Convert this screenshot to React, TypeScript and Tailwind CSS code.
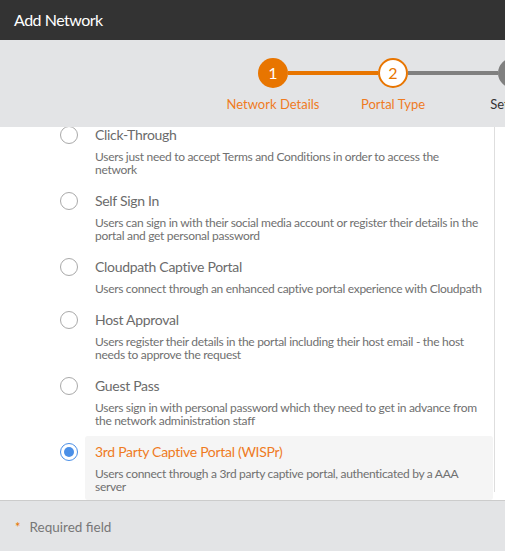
import React from "react";

type Item = { title: string; desc: string; selected?: boolean; narrow?: boolean };

const items: Item[] = [
  {
    title: "Click-Through",
    desc: "Users just need to accept Terms and Conditions in order to access the network",
    narrow: true,
  },
  {
    title: "Self Sign In",
    desc: "Users can sign in with their social media account or register their details in the portal and get personal password",
  },
  {
    title: "Cloudpath Captive Portal",
    desc: "Users connect through an enhanced captive portal experience with Cloudpath",
  },
  {
    title: "Host Approval",
    desc: "Users register their details in the portal including their host email - the host needs to approve the request",
  },
  {
    title: "Guest Pass",
    desc: "Users sign in with personal password which they need to get in advance from the network administration staff",
  },
  {
    title: "3rd Party Captive Portal (WISPr)",
    desc: "Users connect through a 3rd party captive portal, authenticated by a AAA server",
    selected: true,
  },
];

function Radio({ selected }: { selected?: boolean }) {
  return selected ? (
    <div className="mt-[7px] flex h-[18px] w-[18px] shrink-0 items-center justify-center rounded-full border border-[#4a8fe7] bg-white">
      <div className="h-[10px] w-[10px] rounded-full bg-[#4a8fe7]" />
    </div>
  ) : (
    <div className="mt-[7px] h-[18px] w-[18px] shrink-0 rounded-full border border-[#a9a9a9] bg-white" />
  );
}

export default function App() {
  return (
    <div
      className="flex h-[551px] w-[505px] flex-col overflow-hidden bg-white"
      style={{ fontFamily: "Lato, 'Liberation Sans', sans-serif" }}
    >
      <div className="flex h-[40px] shrink-0 items-center bg-[#333333] pl-[14px] text-[16px] tracking-[-0.5px] text-white">
        Add Network
      </div>
      <div className="flex h-[87px] shrink-0 overflow-hidden bg-[#e3e4e6] pl-[213px] pt-[18px]">
        {/* step 1 */}
        <div className="flex w-[120px] shrink-0 flex-col items-center">
          <div className="flex w-full items-center">
            <div className="h-[4px] flex-1" />
            <div className="flex h-[30px] w-[30px] items-center justify-center rounded-full bg-[#e87500] text-[16px] text-white">
              1
            </div>
            <div className="h-[4px] flex-1 bg-[#e87500]" />
          </div>
          <div className="mt-[8px] whitespace-nowrap text-[13px] leading-[16px] text-[#ef7b1f]">
            Network Details
          </div>
        </div>
        {/* step 2 */}
        <div className="flex w-[120px] shrink-0 flex-col items-center">
          <div className="flex w-full items-center">
            <div className="h-[4px] flex-1 bg-[#e87500]" />
            <div className="flex h-[30px] w-[30px] items-center justify-center rounded-full border-2 border-[#e87500] bg-white text-[16px] text-[#e87500]">
              2
            </div>
            <div className="h-[4px] flex-1 bg-[#808080]" />
          </div>
          <div className="mt-[8px] whitespace-nowrap text-[13px] leading-[16px] text-[#ef7b1f]">
            Portal Type
          </div>
        </div>
        {/* step 3 */}
        <div className="flex w-[120px] shrink-0 flex-col items-center">
          <div className="flex w-full items-center">
            <div className="h-[4px] flex-1 bg-[#808080]" />
            <div className="flex h-[30px] w-[30px] items-center justify-center rounded-full bg-[#808080] text-[16px] text-white">
              3
            </div>
            <div className="h-[4px] flex-1" />
          </div>
          <div className="mt-[8px] whitespace-nowrap text-[13px] leading-[16px] text-[#333333]">
            Settings
          </div>
        </div>
      </div>
      <div className="min-h-0 flex-1 overflow-hidden">
        <div className="h-full w-[495px] border-r border-[#dedede]">
          <div className="-mt-[8px] flex flex-col gap-[2px] pl-[60px] pr-[1px]">
            {items.map((it) => (
              <div key={it.title} className="flex items-start gap-[7px]">
                <Radio selected={it.selected} />
                <div
                  className={`flex-1 rounded-[3px] pb-[7px] pl-[10px] pr-[9px] pt-[6px] ${
                    it.selected ? "bg-[#f5f5f5]" : ""
                  }`}
                >
                  <div
                    className={`text-[14px] leading-[20px] tracking-[-0.3px] ${
                      it.selected ? "text-[#ef7b1f]" : "text-[#6b6b6b]"
                    }`}
                  >
                    {it.title}
                  </div>
                  <div
                    className={`mt-[5px] text-[12px] leading-[13px] tracking-[-0.3px] text-[#707070] ${
                      it.narrow ? "max-w-[370px]" : ""
                    }`}
                  >
                    {it.desc}
                  </div>
                </div>
              </div>
            ))}
          </div>
        </div>
      </div>
      <div className="flex h-[51px] shrink-0 items-center border-t border-[#cccccc] bg-[#e3e4e6] pl-[15px] pt-[3px] text-[13px]">
        <span className="mr-[9px] text-[#e87500]">*</span>
        <span className="text-[13.5px] text-[#777777]">Required field</span>
      </div>
    </div>
  );
}
